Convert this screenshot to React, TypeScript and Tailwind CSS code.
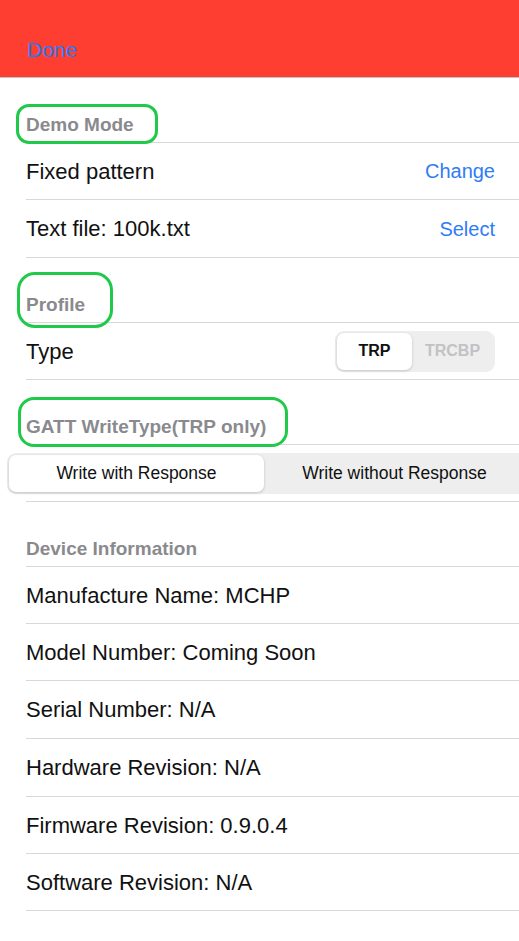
import React from "react";

const font = { fontFamily: '"Liberation Sans", Arial, sans-serif' };

function SectionHeader({ title, h }: { title: string; h: string }) {
  return (
    <div className={`${h} flex items-end pl-[26px] pb-[6px]`}>
      <span className="block text-[19px] leading-[22px] font-bold text-[#8a8a8e]">{title}</span>
    </div>
  );
}

function Sep() {
  return <div className="ml-[26px] h-px bg-[#d8d8dc]" />;
}

function Row({ label, action, h = "h-[56px]" }: { label: string; action?: string; h?: string }) {
  return (
    <div className={`${h} flex items-center justify-between pl-[26px] pr-[24px]`}>
      <span className="text-[22px] text-[#111]">{label}</span>
      {action && <span className="text-[20px] text-[#2f7cf6]">{action}</span>}
    </div>
  );
}

export default function App() {
  return (
    <div className="relative w-[519px] h-[941px] overflow-hidden bg-white" style={font}>
      {/* Nav bar */}
      <div className="h-[78px] bg-[#ff3e32] border-b border-[#c4c4c6] flex items-end pl-[27px] pb-[14px]">
        <span className="text-[21px] leading-[26px] text-[#1f7cf6]">Done</span>
      </div>

      <SectionHeader title="Demo Mode" h="h-[64px]" />
      <Sep />
      <Row label="Fixed pattern" action="Change" />
      <Sep />
      <Row label="Text file: 100k.txt" action="Select" h="h-[57px]" />
      <Sep />

      <SectionHeader title="Profile" h="h-[64px]" />
      <Sep />
      <div className="h-[56px] flex items-center justify-between pl-[26px] pr-[24px]">
        <span className="text-[22px] text-[#111]">Type</span>
        <div className="w-[160px] h-[41px] rounded-[9px] bg-[#eeeeef] p-[2px] flex">
          <div className="w-[75px] h-full rounded-[7px] bg-white shadow-[0_1px_3px_rgba(0,0,0,0.18)] flex items-center justify-center">
            <span className="text-[16px] font-semibold text-[#111]">TRP</span>
          </div>
          <div className="flex-1 flex items-center justify-center">
            <span className="text-[16px] font-semibold text-[#c2c2c4]">TRCBP</span>
          </div>
        </div>
      </div>
      <Sep />

      <SectionHeader title="GATT WriteType(TRP only)" h="h-[64px]" />
      <Sep />
      <div className="h-[56px] flex items-center">
        <div className="ml-[7px] w-[520px] shrink-0 h-[41px] rounded-[9px] bg-[#eeeeef] p-[2px] flex">
          <div className="w-[255px] h-full rounded-[7px] bg-white shadow-[0_1px_3px_rgba(0,0,0,0.2)] flex items-center justify-center">
            <span className="text-[17.5px] text-[#111]">Write with Response</span>
          </div>
          <div className="flex-1 flex items-center justify-center">
            <span className="text-[17.5px] text-[#111]">Write without Response</span>
          </div>
        </div>
      </div>
      <Sep />

      <SectionHeader title="Device Information" h="h-[64px]" />
      <Sep />
      <Row label="Manufacture Name: MCHP" />
      <Sep />
      <Row label="Model Number: Coming Soon" />
      <Sep />
      <Row label="Serial Number: N/A" h="h-[57px]" />
      <Sep />
      <Row label="Hardware Revision: N/A" h="h-[57px]" />
      <Sep />
      <Row label="Firmware Revision: 0.9.0.4" />
      <Sep />
      <Row label="Software Revision: N/A" />
      <Sep />

      {/* Annotation highlight boxes */}
      <div className="absolute left-[16px] top-[104px] w-[142px] h-[40px] rounded-[13px] border-[3px] border-[#20c94a] pointer-events-none" />
      <div className="absolute left-[17px] top-[272px] w-[96px] h-[56px] rounded-[18px] border-[3px] border-[#20c94a] pointer-events-none" />
      <div className="absolute left-[18px] top-[397px] w-[270px] h-[50px] rounded-[16px] border-[3px] border-[#20c94a] pointer-events-none" />
    </div>
  );
}
